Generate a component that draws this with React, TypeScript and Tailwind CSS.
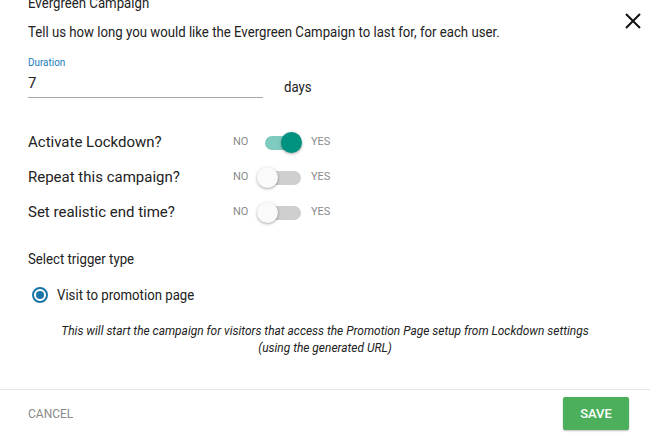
import React from "react";

function Toggle({ on }: { on: boolean }) {
  return (
    <div className="relative w-[40px] h-[24px] flex items-center">
      <div
        className={
          "absolute left-[2px] w-[36px] h-[14px] rounded-full " +
          (on ? "bg-[#7fcbbf]" : "bg-[#cfcfcf]")
        }
      />
      <div
        className={
          "absolute top-[1px] w-[21px] h-[21px] rounded-full shadow-[0_1px_3px_rgba(0,0,0,0.35)] " +
          (on ? "left-[18px] bg-[#00917f]" : "left-[-6px] bg-[#fafafa]")
        }
      />
    </div>
  );
}

function ToggleRow({ label, on }: { label: string; on: boolean }) {
  return (
    <div className="flex items-center h-[35px]">
      <div className="w-[205px] text-[15px] text-[#222]">{label}</div>
      <div className="w-[28px] text-[11px] text-[#8a8a8a]">NO</div>
      <div className="w-[50px] flex items-center pl-[2px]">
        <Toggle on={on} />
      </div>
      <div className="text-[11px] text-[#8a8a8a]">YES</div>
    </div>
  );
}

export default function App() {
  return (
    <div
      className="w-[650px] h-[437px] bg-white overflow-hidden relative flex flex-col"
      style={{ fontFamily: "Roboto, 'Liberation Sans', sans-serif" }}
    >
      <button className="absolute right-[9px] top-[13px] w-[16px] h-[16px]">
        <svg viewBox="0 0 16 16" width="16" height="16">
          <path d="M1 1 L15 15 M15 1 L1 15" stroke="#111" strokeWidth="2" />
        </svg>
      </button>
      <div className="px-[28px] flex-1">
        <div className="mt-[-7px] text-[15px] leading-[20px] text-[#222] origin-left scale-x-[0.88] whitespace-nowrap">
          Evergreen Campaign
        </div>
        <div className="mt-[9px] text-[15px] leading-[20px] text-[#222] origin-left scale-x-[0.88] whitespace-nowrap">
          Tell us how long you would like the Evergreen Campaign to last for, for each user.
        </div>
        <div className="mt-[14px] flex items-end">
          <div className="w-[235px]">
            <div className="text-[11px] leading-[14px] text-[#1a7db7] origin-left scale-x-[0.9]">Duration</div>
            <div className="mt-[3px] text-[15px] leading-[20px] text-[#222] pb-[4px] border-b border-[#a8a8a8]">
              7
            </div>
          </div>
          <div className="ml-[21px] mb-[1px] text-[15px] leading-[20px] text-[#222] origin-left scale-x-[0.88]">
            days
          </div>
        </div>
        <div className="mt-[27px]">
          <ToggleRow label="Activate Lockdown?" on={true} />
          <ToggleRow label="Repeat this campaign?" on={false} />
          <ToggleRow label="Set realistic end time?" on={false} />
        </div>
        <div className="mt-[19px] text-[15px] leading-[20px] text-[#222] origin-left scale-x-[0.88] whitespace-nowrap">
          Select trigger type
        </div>
        <div className="mt-[16px] flex items-center">
          <div className="ml-[4px] w-[16px] h-[16px] rounded-full border-2 border-[#1b75a8] flex items-center justify-center">
            <div className="w-[8px] h-[8px] rounded-full bg-[#1b75a8]" />
          </div>
          <div className="ml-[9px] text-[15px] leading-[20px] text-[#222] origin-left scale-x-[0.88] whitespace-nowrap">
            Visit to promotion page
          </div>
        </div>
        <div className="mt-[17px] text-center italic text-[13px] leading-[17px] text-[#222] origin-center scale-x-[0.918] whitespace-nowrap">
          This will start the campaign for visitors that access the Promotion Page setup from Lockdown settings
          <br />
          (using the generated URL)
        </div>
      </div>
      <div className="border-t border-[#e6e6e6] h-[48px] px-[28px] flex items-center justify-between shrink-0">
        <div className="text-[12px] text-[#8a8a8a]">CANCEL</div>
        <button className="w-[66px] h-[33px] rounded-[2px] bg-[#4caf5c] text-white text-[13px] font-medium shadow-[0_1px_2px_rgba(0,0,0,0.25)] mr-[-7px]">
          SAVE
        </button>
      </div>
    </div>
  );
}
